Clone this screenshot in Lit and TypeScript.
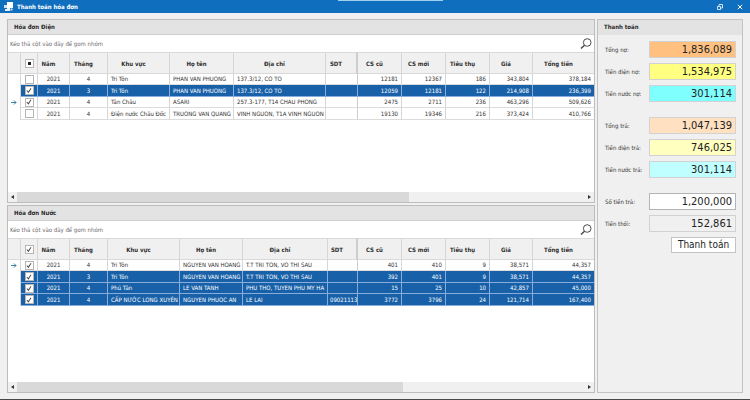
import { LitElement, html, css, svg, nothing } from "lit";
import { customElement, property } from "lit/decorators.js";
import { classMap } from "lit/directives/class-map.js";

interface Bill {
  checked: boolean;
  selected?: boolean;
  current?: boolean;
  year: number;
  month: number;
  area: string;
  name: string;
  address: string;
  phone: string;
  figures: string[];
}

const electric: Bill[] = [
  { checked: false, year: 2021, month: 4, area: "Tri Tôn", name: "PHAN VAN PHUONG", address: "137.3/12, CO TO", phone: "", figures: ["12181", "12367", "186", "343,804", "378,184"] },
  { checked: true, selected: true, year: 2021, month: 3, area: "Tri Tôn", name: "PHAN VAN PHUONG", address: "137.3/12, CO TO", phone: "", figures: ["12059", "12181", "122", "214,908", "236,399"] },
  { checked: true, current: true, year: 2021, month: 4, area: "Tân Châu", name: "ASARI", address: "257.3-177, T14 CHAU PHONG", phone: "", figures: ["2475", "2711", "236", "463,296", "509,626"] },
  { checked: false, year: 2021, month: 4, area: "Điện nước Châu Đốc", name: "TRUONG VAN QUANG", address: "VINH NGUON, T1A VINH NGUON", phone: "", figures: ["19130", "19346", "216", "373,424", "410,766"] },
];

const water: Bill[] = [
  { checked: true, current: true, year: 2021, month: 4, area: "Tri Tôn", name: "NGUYEN VAN HOANG", address: "T.T TRI TON, VO THI SAU", phone: "", figures: ["401", "410", "9", "38,571", "44,357"] },
  { checked: true, selected: true, year: 2021, month: 3, area: "Tri Tôn", name: "NGUYEN VAN HOANG", address: "T.T TRI TON, VO THI SAU", phone: "", figures: ["392", "401", "9", "38,571", "44,357"] },
  { checked: true, selected: true, year: 2021, month: 4, area: "Phú Tân", name: "LE VAN TANH", address: "PHU THO, TUYEN PHU MY HA", phone: "", figures: ["15", "25", "10", "42,857", "45,000"] },
  { checked: true, selected: true, year: 2021, month: 4, area: "CẤP NƯỚC LONG XUYÊN", name: "NGUYEN PHUOC AN", address: "LE LAI", phone: "090211130", figures: ["3772", "3796", "24", "121,714", "167,400"] },
];

const headings = ["Năm", "Tháng", "Khu vực", "Họ tên", "Địa chỉ", "SDT", "CS cũ", "CS mới", "Tiêu thụ", "Giá", "Tổng tiền"];

const base = css`
  * { box-sizing: border-box; }
  button, input { font: inherit; color: inherit; margin: 0; padding: 0; border-radius: 0; }
  svg { display: block; }
`;

const panel = css`
  .panel-title {
    margin: 0; height: 15px; line-height: 14px; padding-left: 6px; flex: none;
    font-size: 6px; font-weight: bold; color: #2b2b2b;
    background: #e3e3e3; border-bottom: 1px solid #cfcfcf;
  }
`;

@customElement("bill-grid")
export class BillGrid extends LitElement {
  @property() heading = "";
  @property({ attribute: false }) rows: Bill[] = [];
  @property({ attribute: false }) widths: number[] = [];
  @property({ type: Number }) thumb = 68;

  static styles = [base, panel, css`
    :host {
      display: flex; flex-direction: column; min-width: 0; min-height: 0; overflow: hidden;
      background: #fff; border: 1px solid #bdbdbd; color: #2f2f2f;
    }
    .search { flex: none; height: 17px; display: flex; align-items: center; justify-content: space-between; padding: 0 2px; color: #6c6c6c; }
    .search button { width: 12px; height: 12px; border: 0; background: none; color: #4a4a4a; }
    table { width: 100%; table-layout: fixed; border-collapse: separate; border-spacing: 0; flex: none; }
    th, td { padding: 0; overflow: hidden; white-space: nowrap; border-right: 1px solid #d6d6d6; }
    th { height: 22px; background: #f0f0f0; border-top: 1px solid #d9d9d9; border-bottom: 1px solid #d9d9d9; padding-right: 10px; font-weight: bold; }
    th.tick, th.mark { padding: 0; }
    td { height: 11px; line-height: 10px; border-bottom: 1px solid #dcdcdc; padding: 0 3px; }
    tr:nth-child(even) td { height: 12px; line-height: 11px; }
    td.mark { border-bottom: 0; padding: 0; }
    td.tick { padding: 0; }
    .mid { text-align: center; }
    .num { text-align: right; }
    .fixed { border-right: 2px solid #cdcdcd; }
    td.fixed { padding-left: 2px; padding-right: 0; border-right: 1px solid #cdcdcd; }
    th:last-child, td:last-child { border-right: 0; }
    .selected td:not(.mark) { background: #1861a8; color: #fff; border-color: #86addb; }
    .mark svg { margin: 0 auto; }
    .tick input {
      appearance: none; display: grid; place-items: center; width: 9px; height: 9px; margin: 0 auto;
      background: #fff; border: 1px solid #b5b5b5;
    }
    .tick input:checked::before {
      content: ""; width: 7px; height: 7px; background: #444;
      clip-path: polygon(14% 54%, 24% 46%, 40% 66%, 74% 14%, 84% 20%, 42% 88%);
    }
    .tick input:indeterminate::before { content: ""; width: 3px; height: 3px; background: #222; clip-path: none; }
    .space { flex: 1; }
    .scroll { flex: none; height: 10px; display: flex; background: #f0f0f0; }
    .scroll button { flex: none; width: 9px; border: 0; background: none; display: grid; place-items: center; }
    .track { flex: 1; }
    .thumb { height: 100%; background: #d9d9d9; }
  `];

  private row(b: Bill) {
    return html`<tr class=${classMap({ selected: !!b.selected })}>
      <td class="mark">${b.current
        ? html`<svg width="6" height="5" viewBox="0 0 6 5" fill="none" stroke="#3a82a0">${svg`<path d="M0 2.5H5M3 .5L5 2.5L3 4.5"/>`}</svg>`
        : nothing}</td>
      <td class="tick"><input type="checkbox" aria-label="Chọn" .checked=${b.checked} /></td>
      <td class="mid">${b.year}</td>
      <td class="mid">${b.month}</td>
      <td>${b.area}</td>
      <td>${b.name}</td>
      <td>${b.address}</td>
      <td class="fixed">${b.phone}</td>
      ${b.figures.map((f) => html`<td class="num">${f}</td>`)}
    </tr>`;
  }

  render() {
    const all = this.rows.every((r) => r.checked);
    return html`
      <h2 class="panel-title">${this.heading}</h2>
      <div class="search">
        <span>Kéo thả cột vào đây để gom nhóm</span>
        <button aria-label="Tìm kiếm">
          <svg width="12" height="12" viewBox="0 0 12 12" fill="none" stroke="currentColor">
            <circle cx="7.200" cy="4.500" r="3.800" stroke-width="1" />
            <path d="M4.500 7.300L1 10.500" stroke-width="1.500" />
          </svg>
        </button>
      </div>
      <table>
        <colgroup>
          ${this.widths.map((w) => html`<col style="width:${w}px" />`)}
          <col />
        </colgroup>
        <thead>
          <tr>
            <th class="mark"></th>
            <th class="tick"><input type="checkbox" aria-label="Chọn tất cả" .checked=${all} .indeterminate=${!all} /></th>
            ${headings.map((h) => html`<th class=${classMap({ fixed: h === "SDT" })}>${h}</th>`)}
          </tr>
        </thead>
        <tbody>${this.rows.map((r) => this.row(r))}</tbody>
      </table>
      <div class="space"></div>
      <div class="scroll">
        <button aria-label="Cuộn trái"><svg width="3" height="4" viewBox="0 0 3 4"><path d="M3 0V4L0 2Z" fill="#333" /></svg></button>
        <div class="track"><div class="thumb" style="width:${this.thumb}%"></div></div>
        <button aria-label="Cuộn phải"><svg width="3" height="4" viewBox="0 0 3 4"><path d="M0 0V4L3 2Z" fill="#333" /></svg></button>
      </div>`;
  }
}

@customElement("app-root")
export class AppRoot extends LitElement {
  static styles = [base, panel, css`
    :host {
      box-sizing: border-box; display: flex; flex-direction: column; height: 100vh; overflow: hidden;
      font: 6px "DejaVu Sans Condensed", "DejaVu Sans", "Noto Sans", sans-serif;
      background: #f0f0f0; border-bottom: 1px solid #4b484b;
    }
    .bar { position: relative; flex: none; height: 13px; display: flex; align-items: center; padding: 0 6px 0 4px; gap: 3px; background: #106ebe; color: #fff; }
    .bar h1 { flex: 1; margin: 0; font-size: 6px; font-weight: bold; }
    .bar button { width: 8px; height: 8px; border: 0; background: none; display: grid; place-items: center; }
    .bar button + button { margin-left: 9px; }
    .notch { position: absolute; top: 0; left: 45%; width: 14%; height: 1px; background: #9fd0f0; }
    main { flex: 1; min-height: 0; display: grid; grid-template-columns: 1fr 146px; gap: 2px; padding: 6px 7px 6px; }
    .grids { min-width: 0; display: grid; grid-template-rows: 184fr 187fr; gap: 2px; }
    .pay { border: 1px solid #c3c3c3; color: #333; }
    .pay .panel-title { border-bottom-color: #e3e3e3; }
    form { padding: 6px 6px 0 7px; display: flex; flex-direction: column; gap: 15px; }
    .group { display: flex; flex-direction: column; gap: 5px; }
    .field { display: grid; grid-template-columns: 1fr 87px; align-items: center; }
    .field input { width: 100%; height: 17px; padding: 0 3px; border: 1px solid #d2d2d2; font-size: 11px; text-align: right; color: #222; background: #f0f0f0; }
    .field .orange { background: #ffc080; }
    .field .yellow { background: #ffff80; }
    .field .cyan { background: #80ffff; }
    .field .peach { background: #ffe0c0; }
    .field .cream { background: #ffffc0; }
    .field .ice { background: #c0ffff; }
    .field .plain { background: #fff; border-color: #b4b4b4; }
    .submit { align-self: flex-end; width: 65px; height: 16px; border: 1px solid #c3c3c3; background: #fff; font-size: 10px; line-height: 14px; color: #222; }
  `];

  private field(id: string, label: string, value: string, tone: string) {
    return html`<div class="field">
      <label for=${id}>${label}</label>
      <input id=${id} class=${tone} type="text" .value=${value} ?readonly=${tone !== "plain"} />
    </div>`;
  }

  render() {
    return html`
      <header class="bar">
        <svg width="10" height="10" viewBox="0 0 10 10">
          <path d="M0 3h3v3H0z" fill="#cfe2f4" />
          <path d="M3 0h6v6H3z" fill="#fff" />
          <path d="M1 7h2v-1h3v3H1z" fill="#e8f1fa" />
          <path d="M6.500 6.500h2v2h-2z" fill="#cfe2f4" />
        </svg>
        <h1>Thanh toán hóa đơn</h1>
        <button aria-label="Khôi phục">
          <svg width="6" height="6" viewBox="0 0 6 6" fill="none" stroke="#fff"><path d="M.5 2.500h3v3h-3zM2 2V.5H5.500V4H4" stroke-width=".8" /></svg>
        </button>
        <button aria-label="Đóng">
          <svg width="6" height="6" viewBox="0 0 6 6" fill="none" stroke="#fff"><path d="M.8.8L5.200 5.200M5.200.8L.8 5.200" /></svg>
        </button>
        <div class="notch"></div>
      </header>
      <main>
        <div class="grids">
          <bill-grid heading="Hóa đơn Điện" .rows=${electric} .thumb=${69} .widths=${[13, 17, 32, 38, 62, 64, 92, 32, 44, 44, 44, 43]}></bill-grid>
          <bill-grid heading="Hóa đơn Nước" .rows=${water} .thumb=${68} .widths=${[13, 17, 32, 38, 72, 63, 85, 30, 44, 44, 44, 43]}></bill-grid>
        </div>
        <section class="pay">
          <h2 class="panel-title">Thanh toán</h2>
          <form @submit=${(e: Event) => e.preventDefault()}>
            <div class="group">
              ${this.field("debt", "Tổng nợ:", "1,836,089", "orange")}
              ${this.field("debt-electric", "Tiền điện nợ:", "1,534,975", "yellow")}
              ${this.field("debt-water", "Tiền nước nợ:", "301,114", "cyan")}
            </div>
            <div class="group">
              ${this.field("due", "Tổng trả:", "1,047,139", "peach")}
              ${this.field("due-electric", "Tiền điện trả:", "746,025", "cream")}
              ${this.field("due-water", "Tiền nước trả:", "301,114", "ice")}
            </div>
            <div class="group">
              ${this.field("paid", "Số tiền trả:", "1,200,000", "plain")}
              ${this.field("change", "Tiền thối:", "152,861", "")}
              <button class="submit">Thanh toán</button>
            </div>
          </form>
        </section>
      </main>`;
  }
}
